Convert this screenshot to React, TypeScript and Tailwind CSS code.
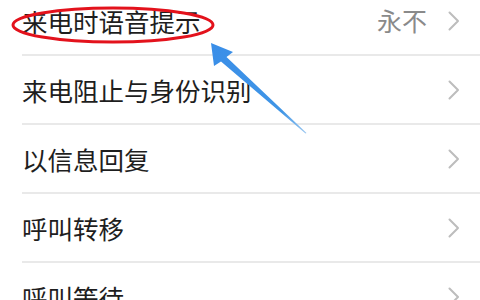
import React from 'react';

// ── Rows of the call settings list ────────────────────────────────────────
const ROWS: { label: string; value?: string }[] = [
  { label: '来电时语音提示', value: '永不' },
  { label: '来电阻止与身份识别' },
  { label: '以信息回复' },
  { label: '呼叫转移' },
  { label: '呼叫等待' },
];

function Chevron() {
  return (
    <svg width="14" height="20" viewBox="0 0 14 20" fill="none" className="shrink-0">
      <path d="M2.5 1.5 L11 10 L2.5 18.5" stroke="#bdbdbd" strokeWidth="2" strokeLinecap="round" strokeLinejoin="round" />
    </svg>
  );
}

function Row({ label, value, last }: { label: string; value?: string; last?: boolean }) {
  return (
    <div className="pl-[22px]">
      <div className="h-[67px] flex items-center pr-[19px]">
        <span className="flex-1 text-[25.5px] leading-none text-[#1e1e1e]">{label}</span>
        {value && <span className="text-[25px] leading-none text-[#8a8a8a] mr-[20px]">{value}</span>}
        <Chevron />
      </div>
      {!last && <div className="h-[2px] bg-[#e9e9e9]" />}
    </div>
  );
}

export default function App() {
  return (
    <div
      className="relative w-[480px] h-[300px] overflow-hidden bg-white"
      style={{ fontFamily: '"Noto Sans CJK SC", "Noto Sans", sans-serif' }}
    >
      <div className="-mt-[13px]">
        {ROWS.map((r, i) => (
          <Row key={r.label} label={r.label} value={r.value} last={i === ROWS.length - 1} />
        ))}
      </div>

      {/* annotation: red ellipse + blue arrow */}
      <svg className="absolute inset-0 pointer-events-none" width="480" height="300" viewBox="0 0 480 300">
        <defs>
          <linearGradient id="arw" x1="211" y1="43" x2="306" y2="133" gradientUnits="userSpaceOnUse">
            <stop offset="0" stopColor="#3a8ee8" />
            <stop offset="0.75" stopColor="#3f95e6" />
            <stop offset="1" stopColor="#9cc8f0" />
          </linearGradient>
        </defs>
        <ellipse cx="113" cy="25" rx="100" ry="17" fill="none" stroke="#e3121c" strokeWidth="3" />
        <polygon
          points="211,43 233,52 226.5,57 306.5,133 305.5,133.5 221,61.5 214,66"
          fill="url(#arw)"
        />
      </svg>
    </div>
  );
}
